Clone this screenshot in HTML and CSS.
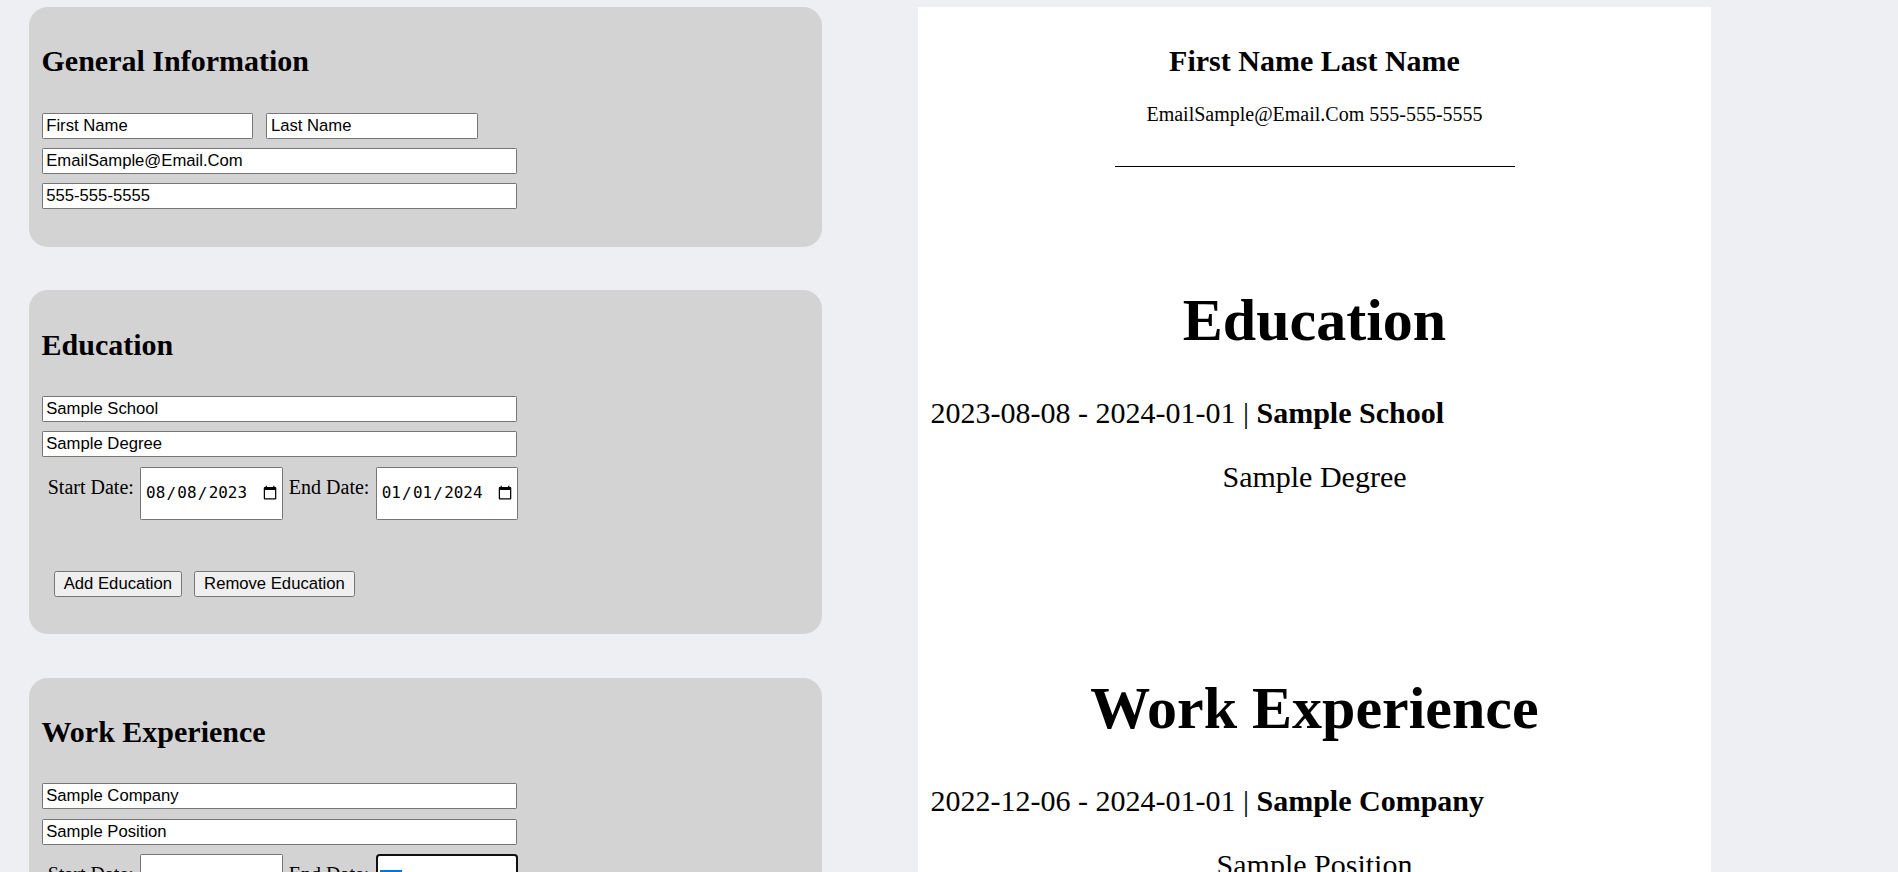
FILE: index.html
```html
<!DOCTYPE html>
<html lang="en">
<head>
<meta charset="utf-8">
<title>CV Builder</title>
<link rel="stylesheet" href="styles.css">
</head>
<body>
<div class="page">
  <div class="editor">
    <section class="card">
      <h2>General Information</h2>
      <div class="name-row">
        <input class="field half" type="text" value="First Name">
        <input class="field half" type="text" value="Last Name">
      </div>
      <input class="field wide" type="email" value="EmailSample@Email.Com">
      <input class="field wide" type="tel" value="555-555-5555">
    </section>

    <section class="card">
      <h2>Education</h2>
      <input class="field wide" type="text" value="Sample School">
      <input class="field wide" type="text" value="Sample Degree">
      <div class="date-row">
        <label>Start Date:</label><input class="date" type="date" value="2023-08-08">
        <label>End Date:</label><input class="date" type="date" value="2024-01-01">
      </div>
      <div class="actions">
        <button type="button">Add Education</button>
        <button type="button">Remove Education</button>
      </div>
    </section>

    <section class="card">
      <h2>Work Experience</h2>
      <input class="field wide" type="text" value="Sample Company">
      <input class="field wide" type="text" value="Sample Position">
      <div class="date-row">
        <label>Start Date:</label><input class="date" type="date" value="2022-12-06">
        <label>End Date:</label><input class="date focused" type="date" value="2024-01-01">
      </div>
      <div class="actions">
        <button type="button">Add Experience</button>
        <button type="button">Remove Experience</button>
      </div>
    </section>
  </div>

  <div class="resume">
    <div class="resume-header">
      <h2>First Name Last Name</h2>
      <p>EmailSample@Email.Com 555-555-5555</p>
    </div>
    <div class="res-section">
      <h1>Education</h1>
      <p class="entry">2023-08-08 - 2024-01-01 | <b>Sample School</b></p>
      <p class="detail">Sample Degree</p>
    </div>
    <div class="res-section">
      <h1>Work Experience</h1>
      <p class="entry">2022-12-06 - 2024-01-01 | <b>Sample Company</b></p>
      <p class="detail">Sample Position</p>
    </div>
  </div>
</div>
</body>
</html>
```
FILE: styles.css
```css
html {
  zoom: 1.25;
  background: #eeeff3;
  scrollbar-width: none;
}

body {
  margin: 0;
  font-family: "Liberation Serif", "Times New Roman", serif;
  color: #000;
}

.page {
  display: flex;
  align-items: flex-start;
  gap: 76.8px;
  padding: 5.6px 0 0 23.2px;
}

.editor {
  width: 634.4px;
  flex: none;
  display: flex;
  flex-direction: column;
  gap: 34.8px;
}

.card {
  background: #d3d3d3;
  border-radius: 15px;
  padding: 10px 10px 30px;
  display: flex;
  flex-direction: column;
  align-items: flex-start;
  gap: 7.5px;
}

.card h2 {
  margin: 19.92px 0;
  font-size: 24px;
  font-weight: bold;
}

.field {
  font-family: "Liberation Sans", Arial, sans-serif;
  font-size: 13.333px;
  height: 20.8px;
  box-sizing: border-box;
  padding: 1px 3px;
  border: 1px solid #767676;
  border-radius: 1px;
  background: #fff;
  color: #000;
  margin: 0;
}

.half {
  width: 169.4px;
}

.wide {
  width: 380px;
}

.name-row {
  display: flex;
  gap: 10.3px;
}

.date-row {
  display: flex;
  align-items: flex-start;
}

.date-row label {
  margin: 7.5px 5px 0;
  font-size: 16px;
}

.date {
  width: 114px;
  height: 42.2px;
  box-sizing: border-box;
  margin: 0;
  padding: 1px 3px;
  border: 1px solid #767676;
  border-radius: 1px;
  background: #fff;
  color: #000;
  font-family: "DejaVu Sans Mono", "Liberation Mono", monospace;
  font-size: 12.75px;
}

.date::-webkit-calendar-picker-indicator {
  margin-left: 0;
  padding: 0;
}

.focused {
  border: 2px solid #101010;
  border-radius: 3px;
  outline: none;
  padding: 0 2px;
}

.focused::-webkit-datetime-edit-month-field {
  background: #0078d7;
  color: #fff;
}

.actions {
  display: flex;
  gap: 10px;
  padding-left: 10px;
  margin-top: 33.3px;
}

.actions button {
  font-family: "Liberation Sans", Arial, sans-serif;
  font-size: 13.333px;
  height: 20.8px;
  box-sizing: border-box;
  margin: 0;
  padding: 1px 7px;
  border: 1px solid #767676;
  border-radius: 2px;
  background: #efefef;
  color: #000;
}

.resume {
  width: 634.4px;
  flex: none;
  box-sizing: border-box;
  min-height: 900px;
  padding: 10px;
  background: #fff;
}

.resume-header {
  width: 320px;
  margin: 0 auto;
  text-align: center;
  border-bottom: 1px solid #000;
  padding-bottom: 16px;
}

.resume-header h2 {
  margin: 19.92px 0;
  font-size: 24px;
}

.resume-header p {
  margin: 16px 0;
  font-size: 16px;
}

.res-section {
  padding: 62.7px 0 26px;
}

.res-section h1 {
  margin: 32px 0 0;
  font-size: 48px;
  text-align: center;
}

.entry {
  margin: 33px 0 0;
  font-size: 24px;
}

.detail {
  margin: 24px 0 23px;
  font-size: 24px;
  text-align: center;
}
```
